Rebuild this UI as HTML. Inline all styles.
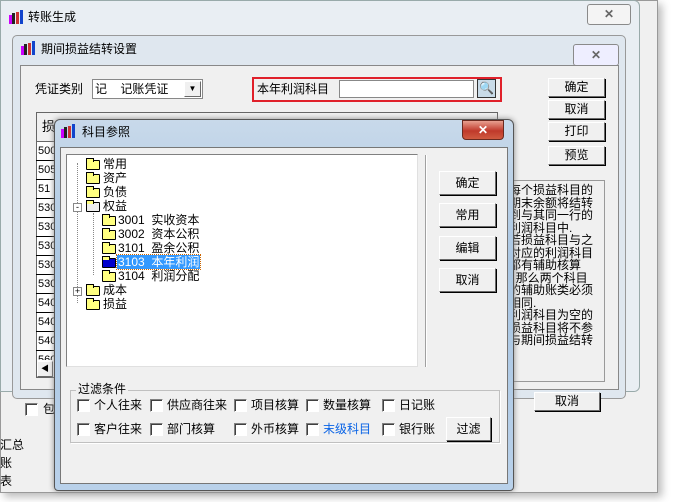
<!DOCTYPE html>
<html><head><meta charset="utf-8"><style>
*{margin:0;padding:0;box-sizing:border-box}
body{width:674px;height:502px;background:#fff;position:relative;overflow:hidden;font-family:"Liberation Sans","Noto Sans CJK SC",sans-serif;font-size:12px;color:#000}
.a{position:absolute}
.btn{position:absolute;background:#f0f0f0;border:1px solid;border-color:#fff #696969 #696969 #fff;box-shadow:1px 1px 0 #000;text-align:center;font-size:12px}
.cb{position:absolute;width:13px;height:13px;background:#fff;border:1px solid;border-color:#808080 #fff #fff #808080;box-shadow:inset 1px 1px 0 #404040}
.fold{position:absolute;width:14px;height:10px;background:#ffff80;border:1px solid #000;border-radius:1px}
.fold:before{content:"";position:absolute;left:-1px;top:-3px;width:6px;height:3px;border:1px solid #000;border-bottom:none;background:#ffff80}
.t{position:absolute;font-size:12px;line-height:14px;white-space:nowrap}
.icon{position:absolute;width:16px;height:14px}
</style></head><body>
<div class="a" style="left:0;top:0;width:658px;height:493px;background:#f0f0f0;box-shadow:4px 4px 8px #bbb;border:1px solid #999"></div>
<div class="a" style="left:0;top:0;width:640px;height:392px;background:#e9eef3;border:1px solid #9aa;border-radius:0 6px 6px 0"></div>
<svg class="icon" style="left:8px;top:10px" viewBox="0 0 16 14"><rect x="1" y="5" width="3" height="9" fill="#c0f"/><rect x="4" y="3" width="3" height="11" fill="#222"/><rect x="8" y="2" width="3" height="12" fill="#c33"/><rect x="12" y="0" width="3" height="14" fill="#14c"/></svg>
<div class="t" style="left:28px;top:10px">转账生成</div>
<div class="a" style="left:587px;top:4px;width:44px;height:21px;border:1px solid #8a8a8a;border-radius:3px;background:#f4f4f4;text-align:center;font-weight:bold;color:#666;line-height:18px">✕</div>
<div class="a" style="left:0;top:436px;font-size:12px;line-height:18px">汇总<br>账<br>表</div>

<div class="a" style="left:12px;top:35px;width:614px;height:364px;background:#dfe7ef;border:1px solid #999;border-radius:5px"></div>
<svg class="icon" style="left:20px;top:41px" viewBox="0 0 16 14"><rect x="1" y="5" width="3" height="9" fill="#c0f"/><rect x="4" y="3" width="3" height="11" fill="#222"/><rect x="8" y="2" width="3" height="12" fill="#c33"/><rect x="12" y="0" width="3" height="14" fill="#14c"/></svg>
<div class="t" style="left:41px;top:42px">期间损益结转设置</div>
<div class="a" style="left:573px;top:44px;width:46px;height:22px;border:1px solid #8a8a8a;border-radius:3px;background:#eef;text-align:center;font-weight:bold;color:#666;line-height:20px">✕</div>
<div class="a" style="left:20px;top:65px;width:599px;height:325px;background:#f0f0f0;border:1px solid #888"></div>
<div class="t" style="left:35px;top:82px">凭证类别</div>
<div class="a" style="left:92px;top:79px;width:111px;height:20px;background:#fff;border:1px solid #888"></div>
<div class="t" style="left:95px;top:82px">记&nbsp;&nbsp;&nbsp;&nbsp;记账凭证</div>
<div class="btn" style="left:184px;top:81px;width:17px;height:16px;box-shadow:none;font-size:8px;line-height:14px">▼</div>
<div class="a" style="left:252px;top:77px;width:250px;height:25px;border:2px solid #e0202a"></div>
<div class="t" style="left:257px;top:82px">本年利润科目</div>
<div class="a" style="left:339px;top:80px;width:135px;height:18px;background:#fff;border:1px solid #888"></div>
<div class="a" style="left:477px;top:79px;width:19px;height:19px;background:#c9dbe8;border:1px solid #333;text-align:center;line-height:16px;color:#048">🔍</div>
<div class="btn" style="left:548px;top:78px;width:57px;height:19px;line-height:17px">确定</div>
<div class="btn" style="left:548px;top:100px;width:57px;height:19px;line-height:17px">取消</div>
<div class="btn" style="left:548px;top:122px;width:57px;height:19px;line-height:17px">打印</div>
<div class="btn" style="left:548px;top:146px;width:57px;height:19px;line-height:17px">预览</div>
<div class="a" style="left:510px;top:180px;width:95px;height:202px;border:1px solid #999;overflow:hidden">
<div style="position:absolute;left:-2px;top:3px;font-size:12px;line-height:12.5px;white-space:nowrap">每个损益科目的<br>期末余额将结转<br>到与其同一行的<br>利润科目中.<br>若损益科目与之<br>对应的利润科目<br>都有辅助核算<br>, 那么两个科目<br>的辅助账类必须<br>相同.<br>利润科目为空的<br>损益科目将不参<br>与期间损益结转</div></div>
<div class="a" style="left:36px;top:112px;width:462px;height:266px;background:#fff;border:1px solid #666"></div>
<div class="a" style="left:36px;top:112px;width:462px;height:30px;background:#f0f0f0;border:1px solid #666"></div>
<div class="t" style="left:42px;top:120px;font-size:13px">损</div>
<div class="a" style="left:36px;top:142px;width:20px;height:218px;font-size:11px;line-height:18px;overflow:hidden">
<div style="border-bottom:1px solid #000;padding-left:2px">500</div><div style="border-bottom:1px solid #000;padding-left:2px">505</div><div style="border-bottom:1px solid #000;padding-left:2px">51</div><div style="border-bottom:1px solid #000;padding-left:2px">530</div><div style="border-bottom:1px solid #000;padding-left:2px">530</div><div style="border-bottom:1px solid #000;padding-left:2px">530</div><div style="border-bottom:1px solid #000;padding-left:2px">530</div><div style="border-bottom:1px solid #000;padding-left:2px">530</div><div style="border-bottom:1px solid #000;padding-left:2px">540</div><div style="border-bottom:1px solid #000;padding-left:2px">540</div><div style="border-bottom:1px solid #000;padding-left:2px">540</div><div style="border-bottom:1px solid #000;padding-left:2px">560</div></div>
<div class="btn" style="left:37px;top:361px;width:16px;height:16px;box-shadow:none;font-size:8px;line-height:14px">◀</div>
<div class="cb" style="left:25px;top:403px"></div>
<div class="t" style="left:43px;top:402px">包</div>
<div class="btn" style="left:534px;top:392px;width:66px;height:19px;line-height:17px">取消</div>

<div class="a" style="left:54px;top:119px;width:460px;height:372px;background:linear-gradient(#c8d9ea,#aac6e2 40%,#b9d1ea);border:1px solid #555;border-radius:6px 6px 4px 4px;box-shadow:0 0 6px #888"></div>
<svg class="icon" style="left:60px;top:124px" viewBox="0 0 16 14"><rect x="1" y="5" width="3" height="9" fill="#c0f"/><rect x="4" y="3" width="3" height="11" fill="#222"/><rect x="8" y="2" width="3" height="12" fill="#c33"/><rect x="12" y="0" width="3" height="14" fill="#14c"/></svg>
<div class="t" style="left:82px;top:125px">科目参照</div>
<div class="a" style="left:462px;top:120px;width:42px;height:20px;background:linear-gradient(#e8a090,#c0392b 55%,#d05a40);border:1px solid #6a2a20;border-radius:0 0 4px 4px;text-align:center;color:#fff;font-weight:bold;line-height:18px">✕</div>
<div class="a" style="left:60px;top:147px;width:448px;height:337px;background:#f0f0f0;border:1px solid #777"></div>
<div class="a" style="left:66px;top:154px;width:352px;height:213px;background:#fff;border:1px solid;border-color:#808080 #e0e0e0 #e0e0e0 #808080"></div>
<div class="a" style="left:425px;top:155px;width:2px;height:212px;border-left:1px solid #a0a0a0;border-right:1px solid #fff"></div>
<div class="a" style="left:77px;top:163px;width:1px;height:140px;border-left:1px dotted #888"></div>
<div class="a" style="left:93px;top:213px;width:1px;height:62px;border-left:1px dotted #888"></div>
<div class="fold" style="left:86px;top:160px"></div><div class="t" style="left:103px;top:157px">常用</div>
<div class="fold" style="left:86px;top:174px"></div><div class="t" style="left:103px;top:171px">资产</div>
<div class="fold" style="left:86px;top:188px"></div><div class="t" style="left:103px;top:185px">负债</div>
<div class="a" style="left:73px;top:203px;width:9px;height:9px;border:1px solid #888;background:#fff;font-size:9px;line-height:6px;text-align:center">-</div>
<div class="fold" style="left:86px;top:202px;background:#eee"></div><div class="t" style="left:103px;top:199px">权益</div>
<div class="fold" style="left:102px;top:216px"></div><div class="t" style="left:118px;top:213px">3001&nbsp;&nbsp;实收资本</div>
<div class="fold" style="left:102px;top:230px"></div><div class="t" style="left:118px;top:227px">3002&nbsp;&nbsp;资本公积</div>
<div class="fold" style="left:102px;top:244px"></div><div class="t" style="left:118px;top:241px">3101&nbsp;&nbsp;盈余公积</div>
<div class="fold" style="left:102px;top:258px;background:#00c"></div><div class="t" style="left:117px;top:255px;background:#3399ff;color:#fff;outline:1px dotted #c60;padding:0 1px">3103&nbsp;&nbsp;本年利润</div>
<div class="fold" style="left:102px;top:272px"></div><div class="t" style="left:118px;top:269px">3104&nbsp;&nbsp;利润分配</div>
<div class="a" style="left:73px;top:287px;width:9px;height:9px;border:1px solid #888;background:#fff;font-size:9px;line-height:7px;text-align:center">+</div>
<div class="fold" style="left:86px;top:286px"></div><div class="t" style="left:103px;top:283px">成本</div>
<div class="fold" style="left:86px;top:300px"></div><div class="t" style="left:103px;top:297px">损益</div>
<div class="btn" style="left:439px;top:171px;width:57px;height:24px;line-height:22px">确定</div>
<div class="btn" style="left:439px;top:203px;width:57px;height:24px;line-height:22px">常用</div>
<div class="btn" style="left:439px;top:236px;width:57px;height:24px;line-height:22px">编辑</div>
<div class="btn" style="left:439px;top:268px;width:57px;height:24px;line-height:22px">取消</div>
<div class="a" style="left:70px;top:390px;width:430px;height:53px;border:1px solid #c0c0c0;box-shadow:1px 1px 0 #fff"></div>
<div class="t" style="left:76px;top:382px;background:#f0f0f0;padding:0 2px">过滤条件</div>
<div class="cb" style="left:77px;top:399px"></div><div class="t" style="left:94px;top:398px">个人往来</div>
<div class="cb" style="left:150px;top:399px"></div><div class="t" style="left:167px;top:398px">供应商往来</div>
<div class="cb" style="left:234px;top:399px"></div><div class="t" style="left:251px;top:398px">项目核算</div>
<div class="cb" style="left:306px;top:399px"></div><div class="t" style="left:323px;top:398px">数量核算</div>
<div class="cb" style="left:382px;top:399px"></div><div class="t" style="left:399px;top:398px">日记账</div>
<div class="cb" style="left:77px;top:423px"></div><div class="t" style="left:94px;top:422px">客户往来</div>
<div class="cb" style="left:150px;top:423px"></div><div class="t" style="left:167px;top:422px">部门核算</div>
<div class="cb" style="left:234px;top:423px"></div><div class="t" style="left:251px;top:422px">外币核算</div>
<div class="cb" style="left:306px;top:423px"></div><div class="t" style="left:323px;top:422px;color:#0a64e6">末级科目</div>
<div class="cb" style="left:382px;top:423px"></div><div class="t" style="left:399px;top:422px">银行账</div>
<div class="btn" style="left:446px;top:417px;width:45px;height:24px;line-height:22px">过滤</div>
</body></html>
